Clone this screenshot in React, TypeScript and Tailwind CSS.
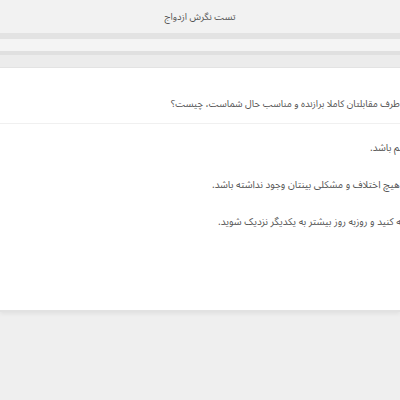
import React from "react";

export default function App() {
  return (
    <div className="w-[400px] h-[400px] overflow-hidden bg-[#efefef] font-['Noto_Sans_Arabic','DejaVu_Sans',sans-serif] text-[#555]">
      <div className="h-[33px] bg-[#f2f2f2] flex items-center justify-center">
        <span dir="rtl" className="text-[9.5px] leading-[16px] text-[#555] pt-[1px]">تست نگرش ازدواج</span>
      </div>
      <div className="h-[6px] bg-[#e3e3e3]" />
      <div className="h-[12px] bg-[#f4f4f4]" />
      <div className="h-[4px] bg-[#e0e0e0]" />
      <div className="h-[13px] bg-[#ececec] border-b border-[#e4e4e4]" />
      <div className="h-[244px] bg-white border-b-2 border-[#e2e2e2] shadow-[0_2px_4px_rgba(0,0,0,0.06)]">
        <div className="h-[56px] border-b border-[#f0f0f0] pt-[22px] whitespace-nowrap">
          <span dir="rtl" className="inline-block ml-[171px] text-[9.6px] leading-[16px]">
            طرف مقابلتان کاملا برازنده و مناسب حال شماست، چیست؟
          </span>
        </div>
        <div className="pt-[16px] flex flex-col gap-[21px] whitespace-nowrap text-[10px] leading-[16px]">
          <div>
            <span dir="rtl" className="inline-block ml-[370px]">مهم باشد.</span>
          </div>
          <div>
            <span dir="rtl" className="inline-block ml-[212px]">هیچ اختلاف و مشکلی بینتان وجود نداشته باشد.</span>
          </div>
          <div>
            <span dir="rtl" className="inline-block ml-[218px]">تجربه کنید و روزبه روز بیشتر به یکدیگر نزدیک شوید.</span>
          </div>
        </div>
      </div>
    </div>
  );
}
